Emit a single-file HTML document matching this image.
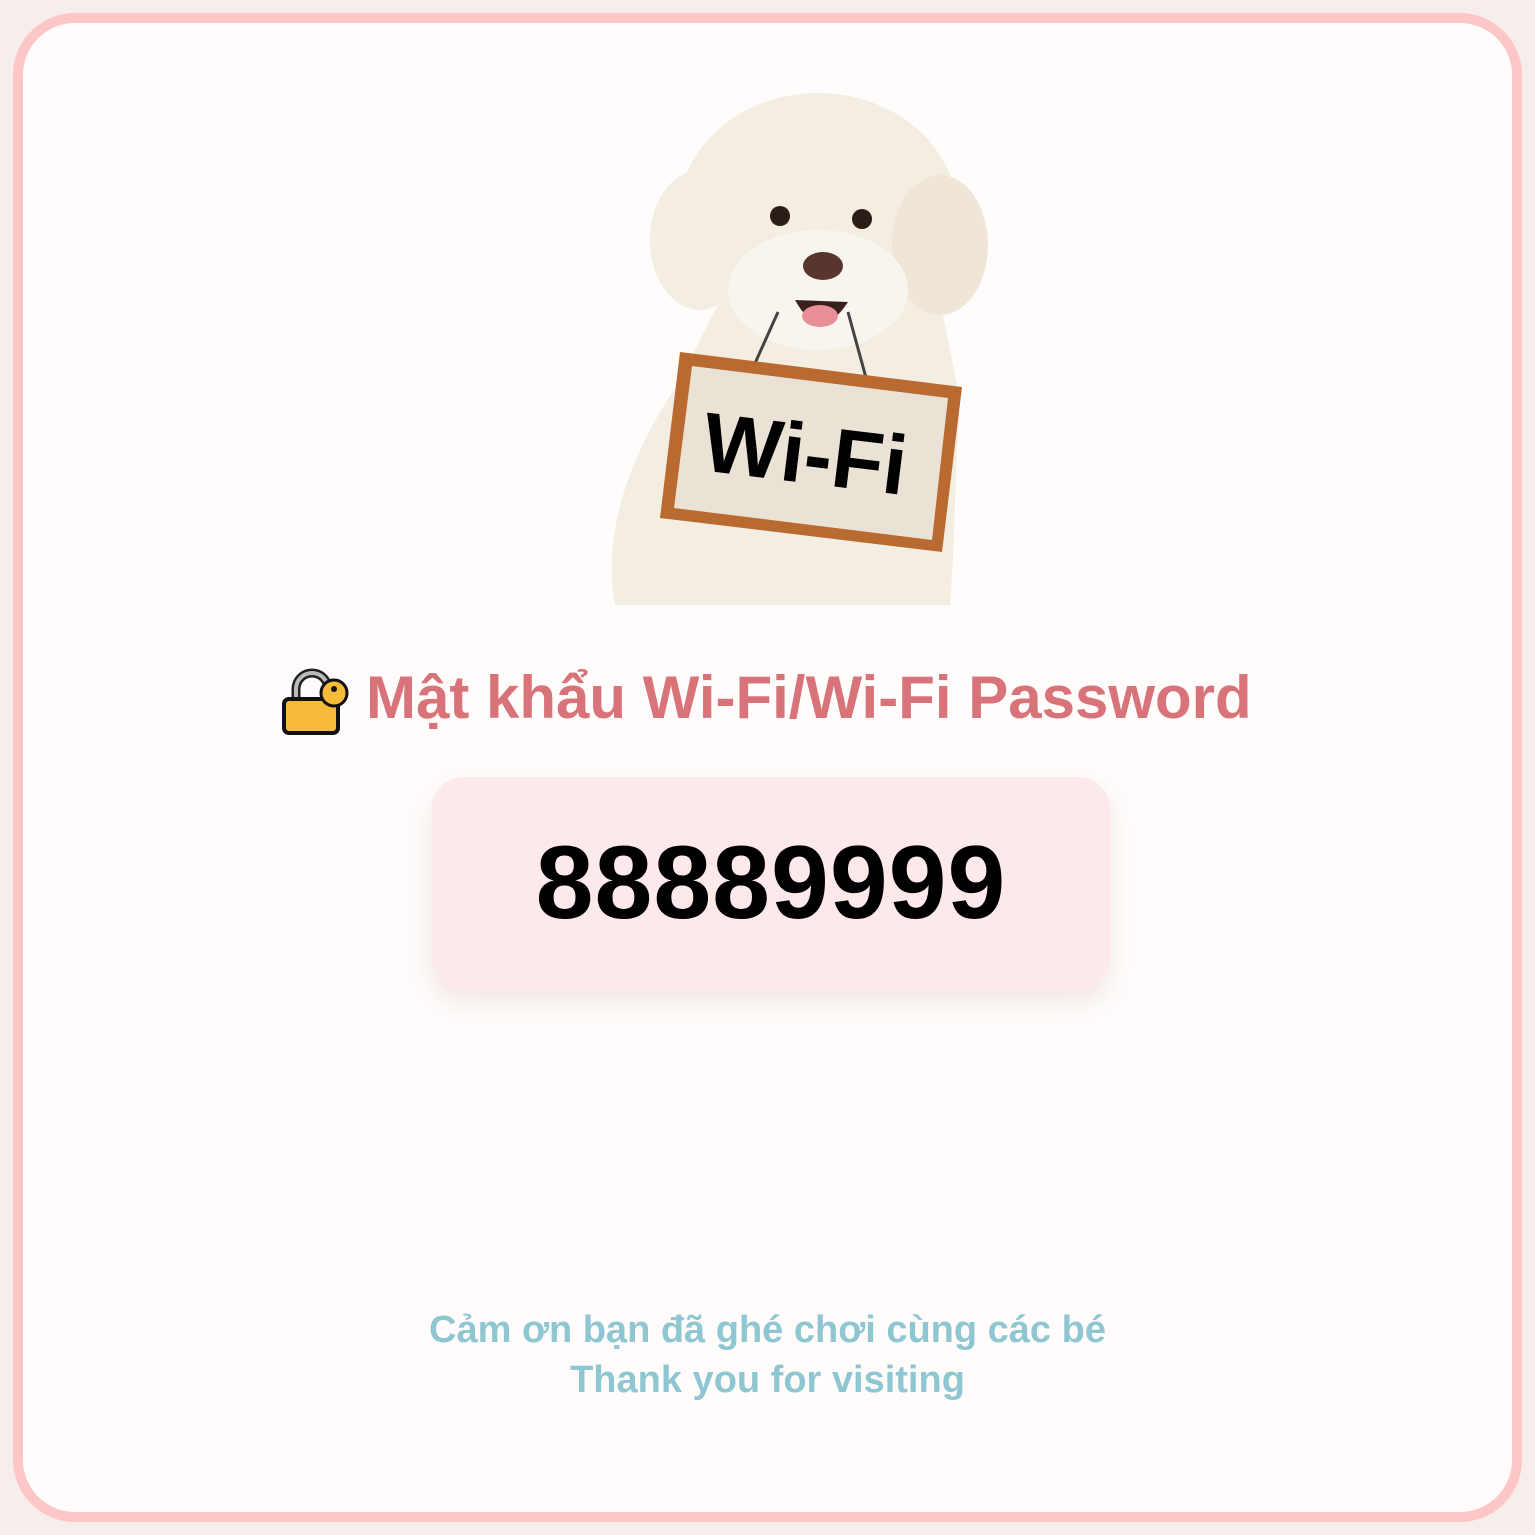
<!DOCTYPE html>
<html><head><meta charset="utf-8"><style>
html,body{margin:0;padding:0}
body{width:1535px;height:1535px;background:#f6eeea;position:relative;overflow:hidden;font-family:"Liberation Sans","DejaVu Sans",sans-serif}
.card{position:absolute;left:13px;top:13px;width:1489px;height:1489px;border:10px solid #ffc6c8;border-radius:62px;background:#fffcfb}
.title{position:absolute;left:366px;top:663px;line-height:70px;font-weight:bold;font-size:60px;color:#d9737a;white-space:nowrap}
.pw{position:absolute;left:432px;top:777px;width:678px;height:213px;border-radius:32px;background:#fde8ea;box-shadow:0 12px 24px rgba(200,170,170,.25);text-align:center;line-height:213px;font-weight:bold;font-size:104px;color:#000;letter-spacing:1px}
.foot{position:absolute;left:0;width:1535px;top:1305px;text-align:center;font-weight:bold;font-size:38px;line-height:50px;color:#8ec6d2}
</style></head><body>
<div class="card"></div>
<svg style="position:absolute;left:0;top:0" width="1535" height="1535">
 <g fill="#f4ede2">
  <path d="M615,605 C600,520 640,440 680,380 L720,300 L940,300 L960,400 C955,470 955,540 950,605 Z"/>
  <ellipse cx="818" cy="215" rx="140" ry="122"/>
  <ellipse cx="700" cy="240" rx="50" ry="70"/>
  <ellipse cx="940" cy="245" rx="48" ry="70" fill="#efe6d8"/>
  <ellipse cx="818" cy="290" rx="90" ry="60" fill="#f8f4ee"/>
 </g>
 <circle cx="780" cy="216" r="10" fill="#2a1d18"/>
 <circle cx="862" cy="219" r="10" fill="#2a1d18"/>
 <ellipse cx="823" cy="266" rx="20" ry="14" fill="#5a3530"/>
 <path d="M795,300 Q820,345 848,302 Z" fill="#3a201c"/>
 <ellipse cx="820" cy="316" rx="18" ry="11" fill="#e88e96"/>
 <path d="M778,312 L752,370 M848,312 L868,385" stroke="#444" stroke-width="3" fill="none"/>
 <polygon points="680,352 962,387 942,552 660,518" fill="#b86a30"/>
 <polygon points="692,366 948,398 932,540 674,508" fill="#ebe2d6"/>
 <text x="0" y="0" transform="translate(700,470) rotate(7)" font-family="Liberation Sans, sans-serif" font-weight="bold" font-size="84" fill="#000">Wi-Fi</text>
 <g transform="translate(280,667)">
  <path d="M16,34 V22 a16,16 0 0 1 32,0 V34" fill="none" stroke="#222" stroke-width="9"/><path d="M16,34 V22 a16,16 0 0 1 32,0 V34" fill="none" stroke="#bbb" stroke-width="4"/><rect x="4" y="32" width="54" height="34" rx="5" fill="#f7bb3a" stroke="#111" stroke-width="4"/><circle cx="54" cy="26" r="13" fill="#f7bb3a" stroke="#111" stroke-width="3"/><circle cx="54" cy="22" r="3" fill="#111"/>
 </g>
</svg>
<div class="title">Mật khẩu Wi-Fi/Wi-Fi Password</div>
<div class="pw">88889999</div>
<div class="foot">Cảm ơn bạn đã ghé chơi cùng các bé<br>Thank you for visiting</div>
</body></html>
